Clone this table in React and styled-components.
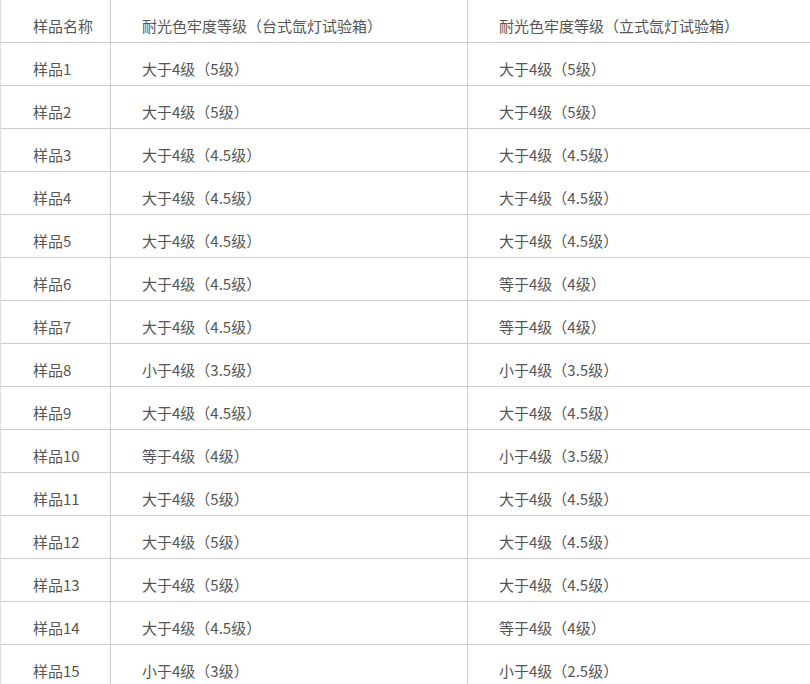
import React from 'react';
import styled, {createGlobalStyle} from 'styled-components';

const GlobalStyle = createGlobalStyle`
  html, body {
    margin: 0;
    padding: 0;
    background: #fff;
  }
`;

const Table = styled.div`
  width: 810px;
  border-left: 1px solid #ddd;
  font-family: "Noto Sans CJK SC", "Microsoft YaHei", sans-serif;
  font-size: 15px;
  color: #555;
`;

const Row = styled.div`
  display: grid;
  grid-template-columns: 110px 357px 1fr;
  height: 43px;
  box-sizing: border-box;
  border-bottom: 1px solid #ccc;
`;

const Cell = styled.div`
  box-sizing: border-box;
  padding: 15px 0 0 ${p => p.$first ? 32 : 31}px;
  line-height: 21px;
  white-space: nowrap;
  border-right: ${p => p.$last ? 'none' : '1px solid #ccc'};
`;

const rows = [
  ['样品1', '大于4级（5级）', '大于4级（5级）'],
  ['样品2', '大于4级（5级）', '大于4级（5级）'],
  ['样品3', '大于4级（4.5级）', '大于4级（4.5级）'],
  ['样品4', '大于4级（4.5级）', '大于4级（4.5级）'],
  ['样品5', '大于4级（4.5级）', '大于4级（4.5级）'],
  ['样品6', '大于4级（4.5级）', '等于4级（4级）'],
  ['样品7', '大于4级（4.5级）', '等于4级（4级）'],
  ['样品8', '小于4级（3.5级）', '小于4级（3.5级）'],
  ['样品9', '大于4级（4.5级）', '大于4级（4.5级）'],
  ['样品10', '等于4级（4级）', '小于4级（3.5级）'],
  ['样品11', '大于4级（5级）', '大于4级（4.5级）'],
  ['样品12', '大于4级（5级）', '大于4级（4.5级）'],
  ['样品13', '大于4级（5级）', '大于4级（4.5级）'],
  ['样品14', '大于4级（4.5级）', '等于4级（4级）'],
  ['样品15', '小于4级（3级）', '小于4级（2.5级）'],
];

function App() {
  return (
    <>
      <GlobalStyle />
      <Table>
        <Row>
          <Cell $first>样品名称</Cell>
          <Cell>耐光色牢度等级（台式氙灯试验箱）</Cell>
          <Cell $last>耐光色牢度等级（立式氙灯试验箱）</Cell>
        </Row>
        {rows.map(r => (
          <Row key={r[0]}>
            <Cell $first>{r[0]}</Cell>
            <Cell>{r[1]}</Cell>
            <Cell $last>{r[2]}</Cell>
          </Row>
        ))}
      </Table>
    </>
  );
}

export default App;
